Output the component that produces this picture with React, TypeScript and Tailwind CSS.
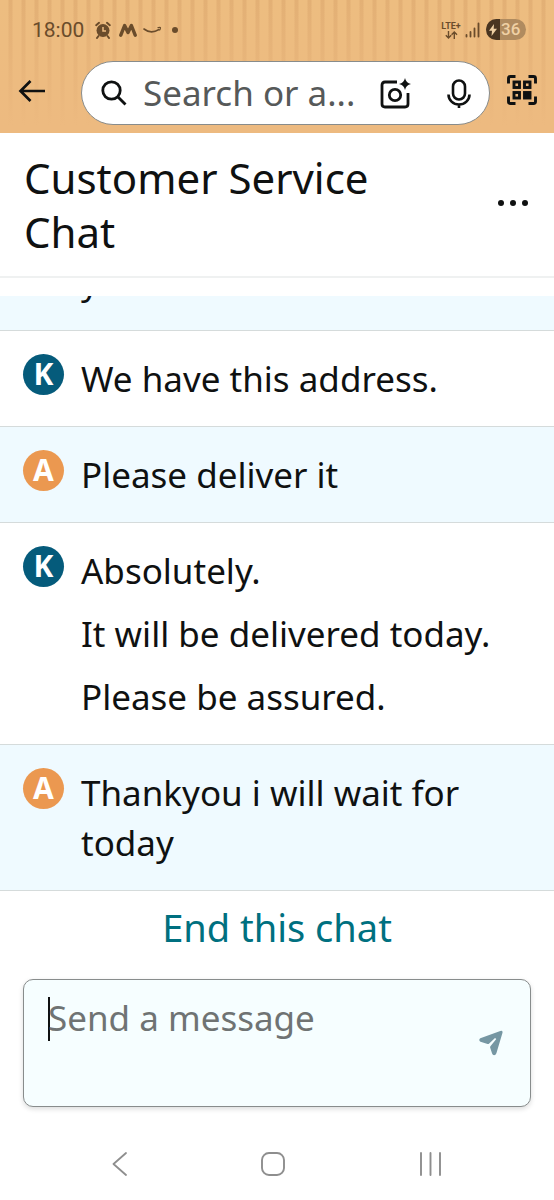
import type { ReactNode } from "react";

type Message = { author: "K" | "A"; lines: string[] };

const messages: Message[] = [
  { author: "K", lines: ["We have this address."] },
  { author: "A", lines: ["Please deliver it"] },
  { author: "K", lines: ["Absolutely.", "It will be delivered today.", "Please be assured."] },
  { author: "A", lines: ["Thankyou i will wait for today"] },
];

function IconButton({ label, className = "", children }: { label: string; className?: string; children: ReactNode }) {
  return (
    <button type="button" aria-label={label} className={`flex shrink-0 items-center justify-center ${className}`}>
      {children}
    </button>
  );
}

function StatusBar() {
  return (
    <div className="flex h-[61px] items-center justify-between pb-0.5 pl-8 pr-7 text-[#6a4c2b]">
      <div className="flex items-center">
        <span className="w-[63px] font-['Roboto',sans-serif] text-[21px] leading-6">18:00</span>
        <svg width="16" height="18" viewBox="0 0 16 18" fill="none" stroke="currentColor">
          <circle cx="8" cy="9.5" r="6.5" fill="currentColor" stroke="none" />
          <path d="M1.2 4.2 4 1.8M14.8 4.2 12 1.8M3.5 15 2 17M12.5 15 14 17" strokeWidth="2" strokeLinecap="round" />
          <path d="M8 6v4h3" stroke="#edbc82" strokeWidth="1.5" />
        </svg>
        <svg className="ml-2" width="18" height="14" viewBox="0 0 18 14" fill="none" stroke="currentColor">
          <path d="M1.8 12.2 5.6 2.5 9 9.5 12.4 2.5 16.2 12.2" strokeWidth="3.4" strokeLinejoin="round" strokeLinecap="round" />
        </svg>
        <svg className="ml-1.5" width="19" height="8" viewBox="0 0 19 8" fill="none" stroke="currentColor">
          <path d="M1 3C5.5 6.5 11 6.5 16 3.5" strokeWidth="1.6" strokeLinecap="round" />
          <path d="M14.500 1.800c1.500-.6 3-.6 3 0s-.3 1.700-1 2.700" strokeWidth="1.100" />
        </svg>
        <span className="ml-2.5 size-1.5 rounded-full bg-[#6a4c2b]" />
      </div>
      <div className="flex items-center">
        <div className="flex w-6 flex-col items-center">
          <span className="font-['Roboto',sans-serif] text-[9px] font-bold leading-[10px]">LTE+</span>
          <svg width="13" height="8" viewBox="0 0 13 8" fill="none" stroke="currentColor" strokeWidth="1.4">
            <path d="M3.5 0v7M.8 4.3 3.5 7l2.700-2.700M9.300 8V1M6.600 3.700 9.300 1 12 3.700" />
          </svg>
        </div>
        <svg className="ml-0.5" width="15" height="16" viewBox="0 0 15 16" fill="none" stroke="currentColor" strokeWidth="1.8" strokeLinecap="round">
          <path d="M1.500 13v1.500M5.500 10v4.500M9.500 6.500v8M13.500 1.500v13" />
        </svg>
        <div className="ml-1.5 flex h-[21px] w-10 overflow-hidden rounded-full bg-[#b08b5f] text-[#efd0a4]">
          <div className="flex w-3.5 items-center justify-center bg-[#493521]">
            <svg width="8" height="12" viewBox="0 0 8 12" fill="currentColor">
              <path d="M5 0 0 6.800h3L2.500 12 8 4.800H4.700Z" />
            </svg>
          </div>
          <span className="pl-px font-['Roboto',sans-serif] text-[17px] font-medium leading-[21px]">36</span>
        </div>
      </div>
    </div>
  );
}

function SearchRow() {
  return (
    <div className="flex items-center pb-2 pl-[17px] pr-[17px] text-[#0f1111]">
      <IconButton label="Back" className="mb-1 mr-9">
        <svg width="28" height="24" viewBox="0 0 28 24" fill="none" stroke="currentColor" strokeWidth="2.7">
          <path d="M28 12H3.500M13.500 2 3.500 12l10 10" />
        </svg>
      </IconButton>
      <label className="flex h-16 min-w-0 flex-1 items-center rounded-full border border-[#888c8c] bg-white pl-[19px] pr-[18px]">
        <svg className="shrink-0" width="26" height="26" viewBox="0 0 26 26" fill="none" stroke="currentColor" strokeWidth="2.8">
          <circle cx="10.500" cy="10.500" r="8.700" />
          <path d="m16.500 16.500 8 8" />
        </svg>
        <input
          type="text"
          aria-label="Search"
          placeholder="Search or a..."
          className="ml-4 min-w-0 flex-1 bg-transparent text-[35px] leading-[50px] outline-none placeholder:text-[#565959]"
        />
        <IconButton label="Search with camera" className="mr-9">
          <svg width="31" height="31" viewBox="0 0 31 31" fill="none" stroke="currentColor" strokeWidth="2.8">
            <path d="M17 4H5Q2 4 2 7v19q0 3 3 3h20q3 0 3-3V15" />
            <circle cx="15" cy="17" r="5.700" />
            <path d="M25 0q1 5 6 6-5 1-6 6-1-5-6-6 5-1 6-6Z" fill="currentColor" stroke="none" />
          </svg>
        </IconButton>
        <IconButton label="Voice search">
          <svg width="24" height="29" viewBox="0 0 24 29" fill="none" stroke="currentColor" strokeWidth="2.6">
            <rect x="6" y="1.500" width="12" height="19" rx="6" />
            <path d="M1.500 15.500a10.500 10 0 0 0 21 0M12 25.500V29" />
          </svg>
        </IconButton>
      </label>
      <IconButton label="Scan code" className="mb-1.5 ml-[17px]">
        <svg width="30" height="30" viewBox="0 0 30 30" fill="none" stroke="currentColor" strokeWidth="2.9">
          <path d="M1.500 8.500V3.500q0-2 2-2h5M21.500 1.500h5q2 0 2 2v5M28.500 21.500v5q0 2-2 2h-5M8.500 28.500h-5q-2 0-2-2v-5" />
          <rect x="7" y="7" width="5.500" height="5.500" />
          <rect x="17.500" y="7" width="5.500" height="5.500" />
          <rect x="7" y="17.500" width="5.500" height="5.500" />
          <rect x="17.500" y="17.500" width="5.500" height="5.500" fill="currentColor" />
        </svg>
      </IconButton>
    </div>
  );
}

function MessageRow({ author, lines }: Message) {
  const fromCustomer = author === "A";
  return (
    <li className={`flex items-start gap-[17px] border-b border-[#d5dbdb] px-[23px] pb-[22px] pt-[23px] ${fromCustomer ? "bg-[#effaff]" : "bg-white"}`}>
      <span
        className={`flex size-[41px] shrink-0 items-center justify-center rounded-full pb-0.5 text-[30px] font-bold leading-none text-white ${
          fromCustomer ? "bg-[#eb9850]" : "bg-[#055b7b]"
        }`}
      >
        {author}
      </span>
      <div className="flex min-w-0 flex-1 flex-col gap-[13px]">
        {lines.map((line) => (
          <p key={line} className="text-[35px] leading-[50px]">
            {line}
          </p>
        ))}
      </div>
    </li>
  );
}

export default function App() {
  return (
    <div className="flex min-h-screen flex-col bg-white font-['Noto_Sans',sans-serif] text-[#0f1111]">
      <header className="bg-[#edba80] bg-[linear-gradient(to_bottom,transparent,#edba80_95%),repeating-linear-gradient(to_right,#edbd80_0px,#edbd80_8px,#e3b075_9px,#e3b075_12px,#edbd80_13px)]">
        <StatusBar />
        <SearchRow />
      </header>

      <div className="flex items-center justify-between border-b-2 border-[#eff1f1] pb-[17px] pl-6 pr-[25px] pt-[18px]">
        <h1 className="max-w-[400px] text-[42px] leading-[54px]">Customer Service Chat</h1>
        <IconButton label="More options" className="mb-1">
          <svg width="32" height="8" viewBox="0 0 32 8" fill="currentColor">
            <circle cx="4" cy="4" r="3" />
            <circle cx="16" cy="4" r="3" />
            <circle cx="28" cy="4" r="3" />
          </svg>
        </IconButton>
      </div>

      <main className="mt-[18px]">
        <div className="flex h-[35px] items-end overflow-hidden border-b border-[#d5dbdb] bg-[#effaff] pb-[23px] pl-[81px]">
          <p className="text-[35px] leading-[50px]">y</p>
        </div>
        <ul>
          {messages.map((message) => (
            <MessageRow key={message.lines[0]} {...message} />
          ))}
        </ul>
      </main>

      <button type="button" className="mt-[11px] self-center text-[38px] leading-[50px] text-[#007080]">
        End this chat
      </button>

      <form className="mx-[23px] mt-[27px] flex h-32 items-center rounded-[10px] border border-[#888c8c] bg-[#f6feff] pl-6 pr-[27px] shadow-[0_2px_5px_rgba(15,17,17,0.15)]">
        <span className="-mr-0.5 mb-12 h-11 w-0.5 shrink-0 bg-[#0f1111]" />
        <textarea
          aria-label="Message"
          placeholder="Send a message"
          rows={2}
          className="min-w-0 flex-1 resize-none overflow-hidden bg-transparent text-[35px] leading-[50px] outline-none placeholder:text-[#6f7373]"
        />
        <IconButton label="Send">
          <svg width="24" height="26" viewBox="0 0 24 26" fill="currentColor" className="text-[#7697a3]">
            <path d="M1.300 8.300 21.300 1q2.600-.7 2.200 1.800L17.400 23.300q-.7 1.900-2.300 1.900-1.500 0-2-1.600L11.200 17.800q-.3-1 .4-1.800L17.300 9l-1.300-1L10.200 13.400q-.7.700-1.600.5L1.500 11.800Q-.8 10 1.300 8.300Z" />
          </svg>
        </IconButton>
      </form>

      <nav className="mt-auto flex h-[72px] items-center justify-between px-28 text-[#8e8e8e]">
        <IconButton label="Back">
          <svg width="15" height="24" viewBox="0 0 15 24" fill="none" stroke="currentColor" strokeWidth="1.8" strokeLinecap="round" strokeLinejoin="round">
            <path d="M14 1 1.500 12 14 23" />
          </svg>
        </IconButton>
        <IconButton label="Home">
          <svg width="24" height="24" viewBox="0 0 24 24" fill="none" stroke="currentColor" strokeWidth="1.9">
            <rect x="1" y="1" width="22" height="22" rx="7" />
          </svg>
        </IconButton>
        <IconButton label="Recent apps">
          <svg width="23" height="24" viewBox="0 0 23 24" fill="none" stroke="currentColor" strokeWidth="1.9" strokeLinecap="round">
            <path d="M2 1v22M11.500 1v22M21 1v22" />
          </svg>
        </IconButton>
      </nav>
    </div>
  );
}
